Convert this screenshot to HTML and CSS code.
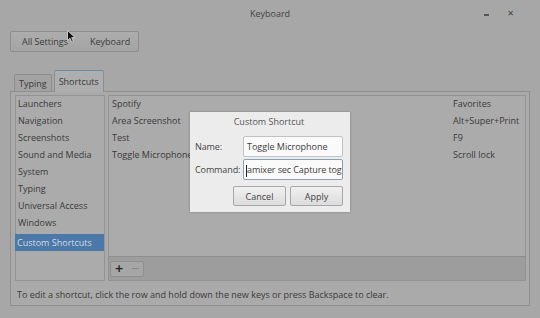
FILE: index.html
```html
<!DOCTYPE html>
<html lang="en">
<head>
  <meta charset="UTF-8" />
  <title>Keyboard</title>
  <link rel="stylesheet" href="styles.css">
</head>
<body>
  <div class="window">
    <div class="titlebar">
      <span class="title">Keyboard</span>
      <span class="controls">
        <span class="min"></span>
        <span class="close">&#x2715;</span>
      </span>
    </div>

    <div class="toolbar">
      <div class="nav-btn">
        <span>All Settings</span>
        <span class="cursor">
          <svg width="9" height="13" viewBox="0 0 9 13"><path d="M0.5 0.5 L0.5 10.5 L3 8.2 L4.8 12.3 L6.3 11.6 L4.6 7.6 L8 7.6 Z" fill="#111" stroke="#eee" stroke-width="0.7"/></svg>
        </span>
        <span>Keyboard</span>
      </div>
    </div>

    <div class="tabs">
      <div class="tab">Typing</div>
      <div class="tab active">Shortcuts</div>
    </div>

    <div class="notebook">
      <div class="panes">
        <ul class="sections">
          <li>Launchers</li>
          <li>Navigation</li>
          <li>Screenshots</li>
          <li>Sound and Media</li>
          <li>System</li>
          <li>Typing</li>
          <li>Universal Access</li>
          <li>Windows</li>
          <li class="selected">Custom Shortcuts</li>
        </ul>
        <div class="shortcuts">
          <ul class="rows">
            <li><span>Spotify</span><span>Favorites</span></li>
            <li><span>Area Screenshot</span><span>Alt+Super+Print</span></li>
            <li><span>Test</span><span>F9</span></li>
            <li><span>Toggle Microphone</span><span>Scroll lock</span></li>
          </ul>
          <div class="list-tools">
            <span class="tool-btn">
              <button class="plus">+</button><button class="minus">&minus;</button>
            </span>
          </div>
        </div>
      </div>
      <p class="hint">To edit a shortcut, click the row and hold down the new keys or press Backspace to clear.</p>
    </div>
  </div>

  <div class="dialog">
    <div class="dialog-title">Custom Shortcut</div>
    <div class="field">
      <label>Name:</label>
      <div class="entry">Toggle Microphone</div>
    </div>
    <div class="field">
      <label>Command:</label>
      <div class="entry focused"><span class="caret"></span>amixer sec Capture tog</div>
    </div>
    <div class="actions">
      <button class="btn">Cancel</button>
      <button class="btn">Apply</button>
    </div>
  </div>
</body>
</html>
```

FILE: styles.css
```css
* {
  box-sizing: border-box;
}

body {
  margin: 0;
  width: 540px;
  height: 318px;
  overflow: hidden;
  background: #a7a7a7;
  font-family: 'Open Sans', 'DejaVu Sans', sans-serif;
  font-size: 9px;
  color: #3a3a3a;
  position: relative;
}

ul {
  list-style: none;
  margin: 0;
  padding: 0;
}

.window {
  height: 318px;
}

.titlebar {
  height: 27px;
  display: flex;
  align-items: center;
  justify-content: center;
  position: relative;
}

.title {
  color: #444;
  font-size: 9px;
}

.controls {
  position: absolute;
  right: 26px;
  top: 7px;
  display: flex;
  gap: 18px;
  align-items: center;
}

.min {
  width: 5px;
  height: 2px;
  background: #555;
  margin-top: 4px;
}

.close {
  font-size: 8px;
  font-weight: bold;
  color: #444;
}

.toolbar {
  padding: 4px 10px 0;
  height: 43px;
}

.nav-btn {
  display: inline-flex;
  align-items: center;
  width: 129px;
  height: 21px;
  border: 1px solid #8d8d8d;
  border-radius: 2px;
  background: linear-gradient(#adadad, #a4a4a4);
  color: #3a3a3a;
  padding-left: 11px;
}

.cursor {
  width: 0;
  position: relative;
  top: -4px;
  left: -1px;
}

.nav-btn span:last-child {
  margin-left: 22px;
}

.tabs {
  display: flex;
  align-items: flex-end;
  padding-left: 14px;
  height: 21px;
  gap: 2px;
}

.tab {
  height: 17px;
  padding: 2px 4px 0;
  border: 1px solid #8d8d8d;
  border-bottom: none;
  border-radius: 2px 2px 0 0;
  background: #a3a3a3;
  color: #3a3a3a;
}

.tab.active {
  height: 22px;
  padding: 4px 4px 0;
  background: #aeaeae;
  border-top: 1px solid #6f8aa8;
  margin-bottom: -1px;
  position: relative;
}

.notebook {
  margin: 0 10px 0 10px;
  height: 215px;
  border: 1px solid #8f8f8f;
  background: #aaaaaa;
  padding: 3px 3px 0 4px;
}

.panes {
  display: flex;
  gap: 3px;
  height: 186px;
}

.sections {
  width: 90px;
  border: 1px solid #939393;
  background: #ababab;
}

.sections li {
  height: 17px;
  line-height: 16px;
  padding-left: 2px;
  white-space: nowrap;
}

.sections li.selected {
  margin: 2px 0 0 -1px;
  background: #4a78a8;
  color: #d4dbe4;
  line-height: 17px;
}

.shortcuts {
  flex: 1;
  display: flex;
  flex-direction: column;
  border: 1px solid #939393;
}

.rows {
  flex: 1;
  background: #ababab;
  border-bottom: 1px solid #8d8d8d;
}

.rows li {
  display: flex;
  justify-content: space-between;
  height: 17px;
  line-height: 16px;
  padding: 0 2px 0 3px;
}

.rows li span:last-child {
  width: 70px;
}

.list-tools {
  height: 23px;
  background: #9d9d9d;
  padding: 4px 0 0 1px;
}

.tool-btn {
  display: inline-flex;
  border: 1px solid #8f8f8f;
  border-radius: 2px;
  background: #a6a6a6;
}

.tool-btn button {
  width: 16px;
  height: 14px;
  padding: 0;
  border: none;
  background: none;
  font-family: 'DejaVu Sans', sans-serif;
  font-size: 11px;
  line-height: 14px;
}

.plus {
  color: #222;
  font-weight: bold;
}

.minus {
  color: #888;
}

.hint {
  margin: 7px 0 0 2px;
  white-space: nowrap;
}

/* modal */
.dialog {
  position: absolute;
  left: 190px;
  top: 112px;
  width: 160px;
  height: 100px;
  background: #ececec;
  box-shadow: 0 0 2px rgba(0, 0, 0, 0.3);
  padding: 2px 7px 0 5px;
  color: #444;
}

.dialog-title {
  text-align: center;
  height: 21px;
  line-height: 15px;
  color: #555;
}

.field {
  display: flex;
  align-items: center;
  justify-content: space-between;
  height: 23px;
}

.field label {
  letter-spacing: -0.1px;
}

.entry {
  width: 100px;
  height: 21px;
  line-height: 19px;
  border: 1px solid #c2c2c2;
  border-radius: 2px;
  background: #fafafa;
  padding-left: 3px;
  color: #3d3d3d;
  white-space: nowrap;
  overflow: hidden;
  font-size: 9px;
}

.entry.focused {
  border-color: #8aa0b8;
  padding-left: 2px;
  letter-spacing: -0.1px;
}

.caret {
  display: inline-block;
  width: 1px;
  height: 12px;
  background: #222;
  vertical-align: middle;
}

.actions {
  display: flex;
  justify-content: flex-end;
  gap: 4px;
  margin-top: 5px;
}

.btn {
  width: 53px;
  height: 20px;
  padding: 0;
  border: 1px solid #a8a8a8;
  border-radius: 2px;
  background: linear-gradient(#f0f0f0, #dcdcdc);
  font-family: 'Open Sans', 'DejaVu Sans', sans-serif;
  font-size: 9px;
  color: #444;
}
```
